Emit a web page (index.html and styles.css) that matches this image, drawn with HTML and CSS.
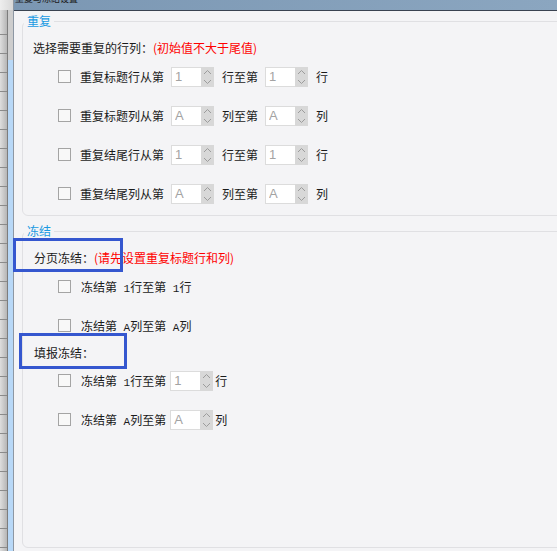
FILE: index.html
```html
<!DOCTYPE html>
<html lang="zh-CN">
<head>
  <meta charset="UTF-8" />
  <title>重复与冻结设置</title>
  <link rel="stylesheet" href="styles.css">
</head>
<body>

  <div class="sheet">
    <div class="sheet-head"></div>
    <div class="sheet-body">
      <div class="sheet-rows"></div>
      <div class="sheet-edge"></div>
    </div>
  </div>

  <div class="dialog">
    <div class="titlebar"><span class="title">重复与冻结设置</span></div>

    <div class="content">
      <fieldset class="group">
        <legend>重复</legend>
        <div class="hint">选择需要重复的行列：<span class="warn">(初始值不大于尾值)</span></div>

        <div class="row">
          <input type="checkbox" class="check">
          <span>重复标题行从第</span>
          <span class="spin"><input class="spin-val" value="1" readonly><span class="spin-btn"><svg width="13" height="20" viewBox="0 0 13 20"><polyline points="3,7 6.5,3.5 10,7"/><polyline points="3,13 6.5,16.5 10,13"/></svg></span></span>
          <span>行至第</span>
          <span class="spin"><input class="spin-val" value="1" readonly><span class="spin-btn"><svg width="13" height="20" viewBox="0 0 13 20"><polyline points="3,7 6.5,3.5 10,7"/><polyline points="3,13 6.5,16.5 10,13"/></svg></span></span>
          <span>行</span>
        </div>

        <div class="row">
          <input type="checkbox" class="check">
          <span>重复标题列从第</span>
          <span class="spin"><input class="spin-val" value="A" readonly><span class="spin-btn"><svg width="13" height="20" viewBox="0 0 13 20"><polyline points="3,7 6.5,3.5 10,7"/><polyline points="3,13 6.5,16.5 10,13"/></svg></span></span>
          <span>列至第</span>
          <span class="spin"><input class="spin-val" value="A" readonly><span class="spin-btn"><svg width="13" height="20" viewBox="0 0 13 20"><polyline points="3,7 6.5,3.5 10,7"/><polyline points="3,13 6.5,16.5 10,13"/></svg></span></span>
          <span>列</span>
        </div>

        <div class="row">
          <input type="checkbox" class="check">
          <span>重复结尾行从第</span>
          <span class="spin"><input class="spin-val" value="1" readonly><span class="spin-btn"><svg width="13" height="20" viewBox="0 0 13 20"><polyline points="3,7 6.5,3.5 10,7"/><polyline points="3,13 6.5,16.5 10,13"/></svg></span></span>
          <span>行至第</span>
          <span class="spin"><input class="spin-val" value="1" readonly><span class="spin-btn"><svg width="13" height="20" viewBox="0 0 13 20"><polyline points="3,7 6.5,3.5 10,7"/><polyline points="3,13 6.5,16.5 10,13"/></svg></span></span>
          <span>行</span>
        </div>

        <div class="row">
          <input type="checkbox" class="check">
          <span>重复结尾列从第</span>
          <span class="spin"><input class="spin-val" value="A" readonly><span class="spin-btn"><svg width="13" height="20" viewBox="0 0 13 20"><polyline points="3,7 6.5,3.5 10,7"/><polyline points="3,13 6.5,16.5 10,13"/></svg></span></span>
          <span>列至第</span>
          <span class="spin"><input class="spin-val" value="A" readonly><span class="spin-btn"><svg width="13" height="20" viewBox="0 0 13 20"><polyline points="3,7 6.5,3.5 10,7"/><polyline points="3,13 6.5,16.5 10,13"/></svg></span></span>
          <span>列</span>
        </div>
      </fieldset>

      <fieldset class="group group-fill">
        <legend>冻结</legend>

        <div class="group-title">
          分页冻结：<span class="warn">(请先设置重复标题行和列)</span>
          <span class="mark mark-a"></span>
        </div>

        <div class="row row-freeze">
          <input type="checkbox" class="check">
          <span>冻结第<span class="num"> 1</span>行至第<span class="num"> 1</span>行</span>
        </div>

        <div class="row row-freeze">
          <input type="checkbox" class="check">
          <span>冻结第<span class="num"> A</span>列至第<span class="num"> A</span>列</span>
        </div>

        <div class="group-title next">
          填报冻结：
          <span class="mark mark-b"></span>
        </div>

        <div class="row row-freeze">
          <input type="checkbox" class="check">
          <span>冻结第<span class="num"> 1</span>行至第</span>
          <span class="spin"><input class="spin-val" value="1" readonly><span class="spin-btn"><svg width="13" height="20" viewBox="0 0 13 20"><polyline points="3,7 6.5,3.5 10,7"/><polyline points="3,13 6.5,16.5 10,13"/></svg></span></span>
          <span>行</span>
        </div>

        <div class="row row-freeze">
          <input type="checkbox" class="check">
          <span>冻结第<span class="num"> A</span>列至第</span>
          <span class="spin"><input class="spin-val" value="A" readonly><span class="spin-btn"><svg width="13" height="20" viewBox="0 0 13 20"><polyline points="3,7 6.5,3.5 10,7"/><polyline points="3,13 6.5,16.5 10,13"/></svg></span></span>
          <span>列</span>
        </div>
      </fieldset>
    </div>
  </div>

</body>
</html>
```

FILE: styles.css
```css
* {
  box-sizing: border-box;
}

html, body {
  height: 100%;
  overflow: hidden;
}

body {
  margin: 0;
  display: flex;
  font-family: "Noto Sans CJK SC", sans-serif;
  font-size: 12px;
  color: #1b1b1b;
  background: #f4f4f6;
}

/* spreadsheet peeking out behind the dialog */
.sheet {
  width: 13px;
  flex: none;
  display: flex;
  flex-direction: column;
}

.sheet-head {
  height: 10px;
  background: linear-gradient(90deg, #eeeeee, #d8d8d8);
}

.sheet-body {
  flex: 1;
  display: flex;
}

.sheet-rows {
  width: 8px;
  border-right: 1px solid #7d7d7d;
  background:
    repeating-linear-gradient(to bottom, transparent 0 18px, #8a8a8a 18px 19px),
    linear-gradient(90deg, #dedede, #b6b6b6);
  background-position: 0 6px, 0 0;
}

.sheet-edge {
  width: 5px;
  background: linear-gradient(to bottom, #cdcdcd 0 50px, #b8d8f7 50px);
}

/* dialog */
.dialog {
  flex: 1;
  min-width: 0;
  display: flex;
  flex-direction: column;
  border-left: 1px solid #8d97a3;
}

.titlebar {
  height: 11px;
  flex: none;
  overflow: hidden;
  padding-left: 1px;
  background: linear-gradient(90deg, #7b97b3, #8ba6c0);
  border-bottom: 1px solid #3a4351;
}

.title {
  display: block;
  font-size: 9px;
  line-height: 12px;
  margin-top: -7px;
  color: #1c1c1c;
}

.content {
  flex: 1;
  display: flex;
  flex-direction: column;
  padding: 0 0 3px 8px;
}

.group {
  margin: 3px -12px 0 0;
  padding: 10px 0 2px 10px;
  min-width: 0;
  border: 1px solid #e0e0e3;
  border-radius: 6px;
}

.group-fill {
  flex: 1;
  margin-top: 8px;
}

legend {
  padding: 0 3px;
  margin-left: -9px;
  line-height: 14px;
  color: #1a9ae2;
}

.hint {
  height: 19px;
  line-height: 19px;
}

.warn {
  color: #ff0000;
}

.row {
  height: 39px;
  display: flex;
  align-items: center;
  padding-left: 25px;
  white-space: nowrap;
}

.check {
  appearance: none;
  flex: none;
  width: 13px;
  height: 13px;
  margin: 0 9px 0 0;
  border: 1px solid #a4a4a4;
  border-radius: 0;
  background: #f8f8f8;
}

.spin {
  display: flex;
  flex: none;
  width: 43px;
  height: 20px;
  margin: 0 8px 0 7px;
}

.spin-val {
  width: 30px;
  height: 20px;
  padding: 0 0 0 3px;
  border: 1px solid #dcdcdc;
  border-right: 0;
  background: #fff;
  font: 13px "Liberation Sans", sans-serif;
  color: #a3a3a3;
  outline: none;
}

.spin-btn {
  width: 13px;
  height: 20px;
  background: #d8d8d8;
}

.spin-btn svg {
  display: block;
  fill: none;
  stroke: #9c9c9c;
  stroke-width: 1;
}

.row-freeze .check {
  margin-right: 10px;
}

.row-freeze .spin {
  margin: 0 2px 0 4px;
}

.num {
  font: 11px "Liberation Mono", monospace;
  white-space: pre;
}

.group-title {
  position: relative;
  height: 19px;
  line-height: 19px;
  padding-left: 1px;
}

.group-title.next {
  height: 16px;
  line-height: 16px;
}

/* blue highlight boxes drawn over the labels */
.mark {
  position: absolute;
  border: 3px solid #3557cf;
}

.mark-a {
  left: -20px;
  top: -10px;
  width: 110px;
  height: 34px;
}

.mark-b {
  left: -14px;
  top: -12px;
  width: 108px;
  height: 36px;
}
```
